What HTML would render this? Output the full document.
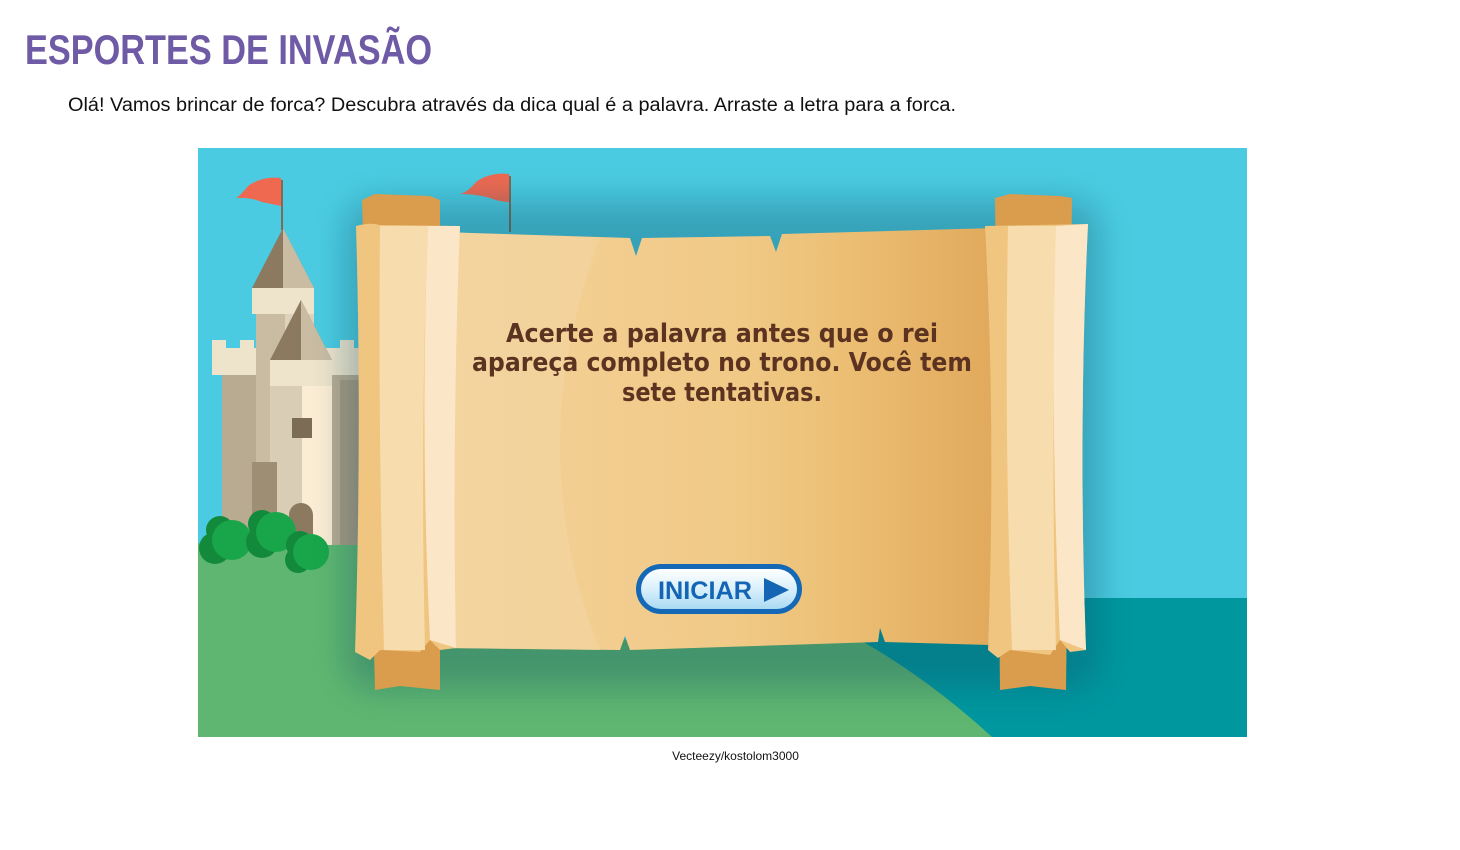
<!DOCTYPE html>
<html><head><meta charset="utf-8"><style>
html,body{margin:0;padding:0;background:#fff;width:1460px;height:850px;overflow:hidden}
svg{display:block}
</style></head><body>
<svg width="1460" height="850" viewBox="0 0 1460 850" xmlns="http://www.w3.org/2000/svg">
<defs>
<clipPath id="c"><rect x="198" y="148" width="1049" height="589"/></clipPath>
<filter id="sh" x="-20%" y="-20%" width="140%" height="140%"><feGaussianBlur stdDeviation="16"/></filter>
<linearGradient id="btn" x1="0" y1="0" x2="0" y2="1"><stop offset="0" stop-color="#ffffff"/><stop offset="0.5" stop-color="#d9f0fb"/><stop offset="1" stop-color="#a9daf3"/></linearGradient>
<linearGradient id="body" x1="0" y1="0" x2="1" y2="0"><stop offset="0" stop-color="#f4d29c"/><stop offset="0.55" stop-color="#f0c985"/><stop offset="0.75" stop-color="#ebbd72"/><stop offset="1" stop-color="#e1a95c"/></linearGradient>
</defs>
<text x="25" y="64" font-family="Liberation Sans, sans-serif" font-weight="bold" font-size="42" fill="#6f5aa6" textLength="407" lengthAdjust="spacingAndGlyphs">ESPORTES DE INVASÃO</text>
<text x="68" y="111" font-family="Liberation Sans, sans-serif" font-size="19" fill="#111" textLength="888" lengthAdjust="spacingAndGlyphs">Olá! Vamos brincar de forca? Descubra através da dica qual é a palavra. Arraste a letra para a forca.</text>
<text x="735.5" y="760" text-anchor="middle" font-family="Liberation Sans, sans-serif" font-size="12" fill="#111">Vecteezy/kostolom3000</text>

<g clip-path="url(#c)">
<rect x="198" y="148" width="1049" height="589" fill="#4bcbe1"/>
<rect x="860" y="598" width="400" height="140" fill="#00979f"/>
<path d="M198 543 L420 543 L420 640 L860 640 Q930 680 992 737 L198 737Z" fill="#5fb670"/>
<!-- castle -->
<rect x="222" y="370" width="150" height="175" fill="#b9ab91"/>
<rect x="212" y="348" width="160" height="27" fill="#eee3cb"/>
<rect x="212" y="340" width="14" height="10" fill="#eee3cb"/><rect x="240" y="340" width="14" height="10" fill="#eee3cb"/><rect x="340" y="340" width="14" height="10" fill="#eee3cb"/>
<rect x="256" y="300" width="58" height="245" fill="#c9bca3"/>
<rect x="285" y="300" width="29" height="245" fill="#ddd2bb"/>
<rect x="252" y="288" width="62" height="26" fill="#eee3cb"/>
<path d="M252 288 L283 228 L314 288Z" fill="#8b7a60"/><path d="M283 228 L314 288 L283 288Z" fill="#c9bca3"/>
<rect x="270" y="360" width="62" height="185" fill="#d9cdb5"/>
<rect x="302" y="360" width="30" height="185" fill="#fbecd4"/>
<rect x="270" y="360" width="62" height="26" fill="#eee3cb"/>
<path d="M270 360 L301 300 L332 360Z" fill="#8b7a60"/><path d="M301 300 L332 360 L301 360Z" fill="#c9bca3"/>
<rect x="292" y="418" width="20" height="20" fill="#7c6b55"/>
<rect x="252" y="462" width="25" height="83" fill="#9e8e74"/>
<path d="M289 545 V515 a12 12 0 0 1 24 0 V545Z" fill="#8b7a60"/>
<rect x="340" y="380" width="30" height="165" fill="#a99a80"/>
<circle cx="220" cy="530" r="14" fill="#138a3b"/><circle cx="215" cy="548" r="16" fill="#138a3b"/><circle cx="232" cy="540" r="20" fill="#19a64a"/>
<circle cx="262" cy="524" r="14" fill="#138a3b"/><circle cx="262" cy="542" r="16" fill="#138a3b"/><circle cx="276" cy="532" r="20" fill="#19a64a"/>
<circle cx="300" cy="545" r="14" fill="#138a3b"/><circle cx="298" cy="560" r="13" fill="#138a3b"/><circle cx="311" cy="552" r="18" fill="#19a64a"/>
<!-- flags -->
<line x1="282" y1="180" x2="282" y2="230" stroke="#7c6b55" stroke-width="2"/>
<path d="M281 178 Q262 176 248 186 Q240 196 236 198 Q250 197 262 202 Q272 204 281 206Z" fill="#ef6951"/>
<line x1="510" y1="176" x2="510" y2="232" stroke="#7c6b55" stroke-width="2"/>
<path d="M509 174 Q490 172 476 182 Q468 192 460 194 Q476 194 490 198 Q500 202 509 202Z" fill="#ef6951"/>
<!-- scroll shadow -->
<rect x="345" y="200" width="755" height="490" rx="30" fill="#0b4f66" opacity="0.32" filter="url(#sh)"/>
<!-- body -->
<path d="M440 232 L630 238 L636 256 L642 238 L770 236 L776 252 L782 234 L995 228 L990 645 L885 642 L880 628 L878 642 L630 650 L625 636 L620 650 L445 648Z" fill="url(#body)"/>
<path d="M600 238 Q520 450 600 650 L445 648 L440 232Z" fill="#f4d6a2" opacity="0.6"/>
<!-- left roll -->
<path d="M362 200 L375 194 L430 196 L440 200 L440 690 L400 686 L375 690Z" fill="#d99d4d"/>
<path d="M356 226 Q370 222 380 225 L460 226 Q452 430 456 648 L440 650 L430 640 L420 652 L380 650 L370 660 L355 652 Q362 430 356 226Z" fill="#f0c57f"/>
<path d="M380 226 L428 226 Q420 430 425 650 L384 650 Q378 430 380 226Z" fill="#f7dcad"/>
<path d="M428 226 L460 226 Q452 430 456 648 L430 640 Q420 430 428 226Z" fill="#fbe6c8"/>
<!-- right roll -->
<path d="M995 198 L1010 194 L1060 196 L1072 198 L1066 690 L1030 686 L1000 690Z" fill="#d99d4d"/>
<path d="M985 226 L1088 224 Q1078 430 1086 650 L1070 652 L1060 640 L1050 655 L1010 650 L998 658 L988 650 Q996 430 985 226Z" fill="#f0c57f"/>
<path d="M1008 226 L1058 226 Q1050 430 1056 650 L1012 650 Q1004 430 1008 226Z" fill="#f7dcad"/>
<path d="M1056 226 L1088 224 Q1078 430 1086 650 L1060 640 Q1050 430 1056 226Z" fill="#fbe6c8"/>
<!-- text -->
<g font-family="DejaVu Sans, Liberation Sans, sans-serif" font-weight="bold" font-size="26" fill="#5b3320" text-anchor="middle">
<text x="722" y="342" textLength="432" lengthAdjust="spacingAndGlyphs">Acerte a palavra antes que o rei</text>
<text x="722" y="371" textLength="500" lengthAdjust="spacingAndGlyphs">apareça completo no trono. Você tem</text>
<text x="722" y="401" textLength="200" lengthAdjust="spacingAndGlyphs">sete tentativas.</text>
</g>
<!-- button -->
<rect x="636" y="564" width="166" height="50" rx="25" fill="#1468b6"/>
<rect x="641" y="569" width="156" height="40" rx="20" fill="url(#btn)"/>
<text x="658" y="599" font-family="Liberation Sans, sans-serif" font-weight="bold" font-size="25" fill="#1466b5" textLength="94" lengthAdjust="spacingAndGlyphs">INICIAR</text>
<path d="M764 578 L789 590 L764 602Z" fill="#1466b5"/>
</g>
</svg>
</body></html>
